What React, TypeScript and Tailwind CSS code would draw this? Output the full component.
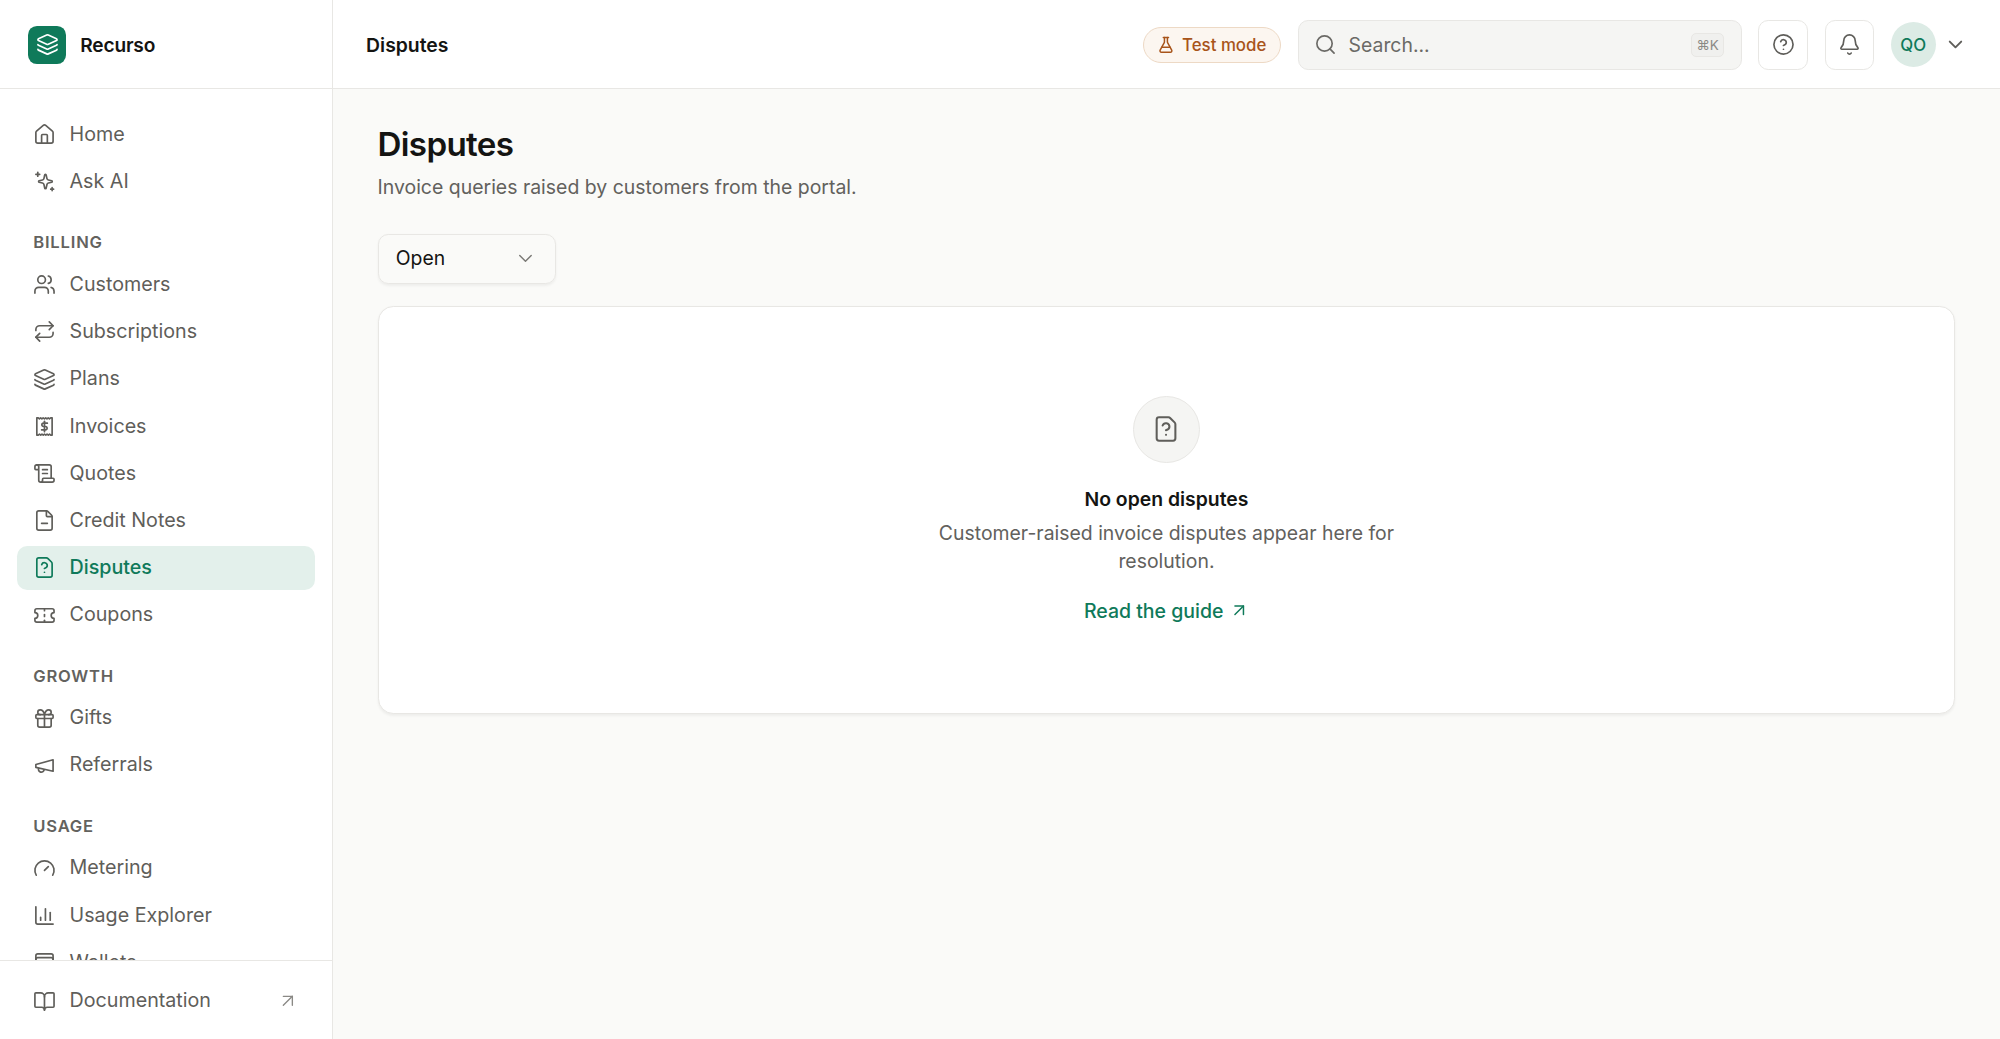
import React from "react";
import {
  House, Users, Repeat, Layers, ScrollText, FileMinus, FileQuestionMark, Gift,
  Gauge, ChartColumn, WalletCards, BookOpen, ArrowUpRight, FlaskConical, CircleHelp, Bell, ChevronDown, Search,
} from "lucide-react";

type IconProps = { className?: string };

const Svg = ({ className = "", children }: IconProps & { children: React.ReactNode }) => (
  <svg viewBox="0 0 24 24" fill="none" stroke="currentColor" strokeLinecap="round" strokeLinejoin="round" className={className}>
    {children}
  </svg>
);

const Receipt = ({ className }: IconProps) => (
  <Svg className={className}>
    <path d="M4 3h1.5l1.2 1 1.3-1 1.3 1 1.3-1 1.4 1 1.3-1 1.3 1 1.3-1 1.3 1 1.3-1H20v18h-1.5l-1.2-1-1.3 1-1.3-1-1.3 1-1.4-1-1.3 1-1.3-1-1.3 1-1.3-1-1.3 1H4z" />
    <path d="M15 8.5h-4a1.75 1.75 0 0 0 0 3.5h2a1.75 1.75 0 0 1 0 3.5H9" />
    <path d="M12 6.5v11" />
  </Svg>
);

const Star = ({ className }: IconProps) => (
  <Svg className={className}>
    <path d="M12.2 5.4a.8.8 0 0 1 1.6 0l.8 3.6a2 2 0 0 0 1.5 1.5l3.5.8a.8.8 0 0 1 0 1.5l-3.5.8a2 2 0 0 0-1.5 1.5l-.8 3.6a.8.8 0 0 1-1.6 0l-.8-3.6a2 2 0 0 0-1.5-1.5l-3.5-.8a.8.8 0 0 1 0-1.5l3.5-.8a2 2 0 0 0 1.5-1.5z" />
    <path d="M5 2.5v4" />
    <path d="M3 4.5h4" />
    <path d="M20 18.5v3" />
    <path d="M18.5 20h3" />
  </Svg>
);

const Coupon = ({ className }: IconProps) => (
  <Svg className={className}>
    <path d="M2 9a3 3 0 0 1 0 6v2a2 2 0 0 0 2 2h16a2 2 0 0 0 2-2v-2a3 3 0 0 1 0-6V7a2 2 0 0 0-2-2H4a2 2 0 0 0-2 2Z" />
    <path d="M12 5v2" />
    <path d="M12 17v2" />
    <path d="M12 11v2" />
  </Svg>
);

const Horn = ({ className }: IconProps) => (
  <Svg className={className}>
    <path d="m3 11 18-5v12L3 14v-3z" />
    <path d="M11.6 16.8a3 3 0 1 1-5.8-1.6" />
  </Svg>
);

const Item = ({ icon: I, label, active }: { icon: React.ComponentType<IconProps>; label: string; active?: boolean }) => (
  <div className={`flex h-[35px] shrink-0 items-center gap-[10.5px] rounded-lg px-[13px] text-[15.45px] ${active ? "bg-[#e3f0eb] font-medium text-[#0f7a5a]" : "text-[#5f5e5a]"}`}>
    <I className="size-[18px] shrink-0 [stroke-width:1.75]" />
    <span>{label}</span>
  </div>
);

const Label = ({ children }: { children: React.ReactNode }) => (
  <div className="mt-[14.75px] flex h-[27px] shrink-0 items-center px-[13px] text-[13px] font-semibold tracking-[0.05em] text-[#63625e] uppercase">{children}</div>
);

export default function App() {
  return (
    <div className="flex h-[814.6px] w-[1568px] overflow-hidden bg-[#fafaf8] font-['Inter',sans-serif] text-[#141412] [zoom:1.27551]">
      <aside className="flex w-[261px] shrink-0 flex-col border-r border-[#e8e7e4] bg-white">
        <div className="flex h-[70px] shrink-0 items-center gap-[11px] border-b border-[#e8e7e4] px-[22px] pt-px">
          <div className="flex size-[30px] items-center justify-center rounded-[7px] bg-[#0f7a5a] text-white">
            <Layers className="size-[18px] [stroke-width:1.75]" />
          </div>
          <span className="pt-px text-[15px] font-semibold tracking-[-0.01em]">Recurso</span>
        </div>
        <nav className="flex min-h-0 flex-1 flex-col gap-[2px] overflow-hidden px-[13px] pt-[18px]">
          <Item icon={House} label="Home" />
          <Item icon={Star} label="Ask AI" />
          <Label>Billing</Label>
          <Item icon={Users} label="Customers" />
          <Item icon={Repeat} label="Subscriptions" />
          <Item icon={Layers} label="Plans" />
          <Item icon={Receipt} label="Invoices" />
          <Item icon={ScrollText} label="Quotes" />
          <Item icon={FileMinus} label="Credit Notes" />
          <Item icon={FileQuestionMark} label="Disputes" active />
          <Item icon={Coupon} label="Coupons" />
          <Label>Growth</Label>
          <Item icon={Gift} label="Gifts" />
          <Item icon={Horn} label="Referrals" />
          <Label>Usage</Label>
          <Item icon={Gauge} label="Metering" />
          <Item icon={ChartColumn} label="Usage Explorer" />
          <Item icon={WalletCards} label="Wallets" />
        </nav>
        <div className="flex h-[62px] shrink-0 items-center justify-between border-t border-[#e8e7e4] pt-[2px] pr-[26px] pl-[26px] text-[15.45px] text-[#5f5e5a]">
          <div className="flex items-center gap-[10.5px]">
            <BookOpen className="size-[18px] [stroke-width:1.75]" />
            <span>Documentation</span>
          </div>
          <ArrowUpRight className="size-[17px] text-[#8a8985] [stroke-width:1.5]" />
        </div>
      </aside>
      <div className="flex min-w-0 flex-1 flex-col">
        <header className="flex h-[70px] shrink-0 items-center border-b border-[#e8e7e4] bg-white pt-px pr-[26px] pl-[26px]">
          <span className="pt-px text-[15.2px] font-semibold">Disputes</span>
          <div className="ml-auto flex items-center gap-[13px]">
            <div className="flex h-[28px] items-center gap-[5.5px] rounded-full border border-[#edd9c5] bg-[#fcf6f0] pr-[11px] pl-[10.5px] text-[13.2px] font-medium text-[#a8541a]">
              <FlaskConical className="size-[14px] [stroke-width:2]" />
              <span className="pt-px">Test mode</span>
            </div>
            <div className="flex h-[39px] w-[348px] items-center gap-[9px] rounded-lg border border-[#e8e7e4] bg-[#f5f5f3] pr-[13px] pl-[12px] text-[15.2px] text-[#6b6a66]">
              <Search className="size-[18px] [stroke-width:1.75]" />
              <span className="pt-px">Search...</span>
              <kbd className="ml-auto flex h-[19px] w-[26px] items-center justify-center rounded-[4px] border border-[#e8e7e4] bg-[#f0f0ee] font-['Inter',sans-serif] text-[10.5px] text-[#8a8985]">⌘K</kbd>
            </div>
            <button className="flex size-[39px] items-center justify-center rounded-lg border border-[#e8e7e4] bg-white text-[#5f5e5a]">
              <CircleHelp className="size-[18px] [stroke-width:1.75]" />
            </button>
            <button className="flex size-[39px] items-center justify-center rounded-lg border border-[#e8e7e4] bg-white text-[#5f5e5a]">
              <Bell className="size-[18px] [stroke-width:1.75]" />
            </button>
            <div className="flex items-center gap-[6.5px]">
              <div className="flex size-[35px] items-center justify-center rounded-full bg-[#dcebe5] pt-px text-[13.2px] font-medium text-[#0f7a5a]">QO</div>
              <ChevronDown className="size-[18px] text-[#5f5e5a] [stroke-width:2]" />
            </div>
          </div>
        </header>
        <main className="flex-1 px-[35px] pt-[26px]">
          <h1 className="text-[26px] leading-[36px] font-semibold tracking-[-0.02em]">Disputes</h1>
          <p className="mt-[3.5px] text-[15.25px] leading-[22px] text-[#62615d]">Invoice queries raised by customers from the portal.</p>
          <div className="mt-[26px] flex h-[39px] w-[140px] items-center justify-between rounded-lg border border-[#e8e7e4] pr-[14px] pl-[13.5px] text-[15.2px] shadow-xs">
            Open
            <ChevronDown className="size-[18px] text-[#7a7975] [stroke-width:1.5]" />
          </div>
          <section className="mt-[17.5px] flex h-[320px] flex-col items-center rounded-xl border border-[#e8e7e4] bg-white pt-[70px] shadow-xs">
            <div className="flex size-[52px] items-center justify-center rounded-full border border-[#e8e7e4] bg-[#f5f5f3] text-[#5f5e5a]">
              <FileQuestionMark className="size-[22px] [stroke-width:1.75]" />
            </div>
            <h2 className="mt-[17.5px] text-[15.2px] leading-[22px] font-semibold">No open disputes</h2>
            <p className="mt-[4.5px] w-[380px] text-center text-[15.23px] leading-[22px] text-[#62615d]">Customer-raised invoice disputes appear here for resolution.</p>
            <a className="mt-[17px] flex items-center gap-[4px] text-[15.3px] leading-[22px] font-medium text-[#0f7a5a]">
              Read the guide
              <ArrowUpRight className="size-[16px] [stroke-width:1.75]" />
            </a>
          </section>
        </main>
      </div>
    </div>
  );
}
